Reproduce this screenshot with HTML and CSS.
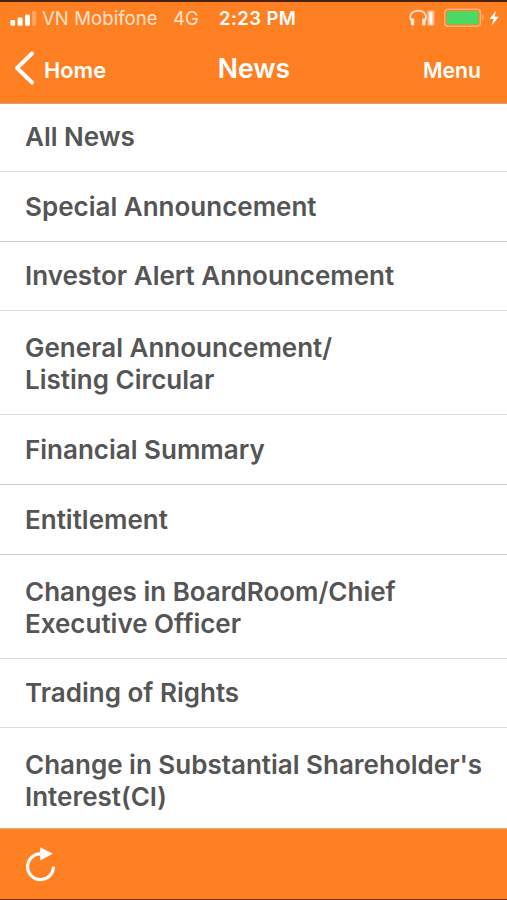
FILE: index.html
```html
<!DOCTYPE html>
<html lang="en">

<head>
    <meta charset="UTF-8">
    <meta name="viewport" content="width=device-width, initial-scale=1.0">
    <title>News</title>
    <link rel="stylesheet" href="styles.css">
</head>

<body>
    <div class="app">
        <div class="status">
            <svg class="signal" width="28" height="16" viewBox="0 0 28 16" fill="#fff">
                <rect x="0.3" y="10" width="4.8" height="5.7" rx="1.3" />
                <rect x="7.6" y="7.5" width="5" height="8.2" rx="1.3" />
                <rect x="15" y="4.5" width="5" height="11.2" rx="1.3" />
                <rect x="22.2" y="1" width="4" height="14.7" rx="1.3" opacity="0.3" />
            </svg>
            <span class="carrier">VN Mobifone</span>
            <span class="network">4G</span>
            <span class="time">2:23 PM</span>
            <svg class="battery" width="92" height="20" viewBox="0 0 92 20">
                <path d="M3.4 12.5C0.5 8 3.7 2.6 10.2 2.6S19.7 8 17 12.5" fill="none" stroke="#ffe3ce" stroke-width="1.8" />
                <rect x="2.9" y="10.4" width="3.3" height="7" rx="1" fill="#ffe9da" />
                <rect x="14.2" y="10.4" width="3.3" height="7" rx="1" fill="#ffe9da" />
                <rect x="19.4" y="2.5" width="7" height="15" rx="1" fill="#ffb98c" />
                <rect x="21.4" y="3.7" width="3" height="12.8" fill="#fff" />
                <rect x="36.8" y="1.2" width="35.6" height="17" rx="3.2" fill="none" stroke="#ffac70" stroke-width="1.6" />
                <rect x="38.6" y="3" width="32" height="13.4" rx="1" fill="#4bd863" />
                <path d="M74.2 6.6q3.6 3 0 6z" fill="#ffac70" />
                <path d="M88.2 2.5L81.5 11h4l-1.8 6.5L90.8 8.8h-4.3z" fill="#fff" />
            </svg>
        </div>
        <div class="navbar">
            <div class="back">
                <svg width="22" height="36" viewBox="0 0 22 36" fill="none" stroke="#fff" stroke-width="4" stroke-linecap="round" stroke-linejoin="round">
                    <path d="M19 3.5L4 18L19 32.5" />
                </svg>
                <span>Home</span>
            </div>
            <h1>News</h1>
            <div class="menu">Menu</div>
        </div>
        <ul class="list">
            <li class="light">All News</li>
            <li>Special Announcement</li>
            <li class="light">Investor Alert Announcement</li>
            <li class="double light">General Announcement/<br>Listing Circular</li>
            <li>Financial Summary</li>
            <li>Entitlement</li>
            <li class="double light">Changes in BoardRoom/Chief<br>Executive Officer</li>
            <li class="light">Trading of Rights</li>
            <li class="double">Change in Substantial Shareholder's<br>Interest(CI)</li>
        </ul>
        <div class="toolbar">
            <svg width="32" height="38" viewBox="0 0 32 38">
                <path d="M15.5 8.8A12.9 12.9 0 1 0 28.4 21.5" fill="none" stroke="#fff" stroke-width="3.2" />
                <path d="M15.2 2.2L27.8 8.8L15.2 15.5z" fill="#fff" />
            </svg>
        </div>
    </div>
</body>

</html>
```
FILE: styles.css
```css
* {
    margin: 0;
    padding: 0;
    box-sizing: border-box;
}

body {
    font-family: Inter, "Liberation Sans", sans-serif;
    background-color: #fff;
}

.app {
    height: 900px;
    overflow: hidden;
    display: flex;
    flex-direction: column;
}

.status {
    height: 34px;
    flex-shrink: 0;
    display: flex;
    align-items: center;
    padding-left: 10px;
    background-color: #ff8022;
    border-top: 2px solid #4b230b;
    color: #ffe3ce;
    font-size: 18.5px;
    line-height: 32px;
    white-space: nowrap;
}

.signal {
    margin-right: 4px;
}

.carrier {
    width: 131px;
    letter-spacing: 0.1px;
}

.network {
    width: 46px;
}

.time {
    width: 189px;
    color: #fff;
    font-weight: 600;
    letter-spacing: 0.4px;
}

.navbar {
    height: 70px;
    flex-shrink: 0;
    display: grid;
    grid-template-columns: 1fr auto 1fr;
    align-items: center;
    padding: 0 26px 1px 13px;
    background-color: #ff8022;
    border-bottom: 1px solid #d3a080;
    color: #fff;
    font-size: 21.8px;
    font-weight: 600;
}

.back {
    display: flex;
    align-items: center;
    gap: 9px;
}

.navbar h1 {
    font-size: 26.6px;
    font-weight: 600;
    padding: 0 0 1px 14px;
}

.menu {
    text-align: right;
    font-size: 21.2px;
    padding-top: 3px;
}

.back span {
    padding-top: 3px;
}

.list {
    flex: 1;
    min-height: 0;
    overflow: hidden;
    list-style: none;
}

.list li {
    height: 69.7px;
    padding: 18.7px 0 0 25px;
    border-bottom: 1px solid #cbcdcc;
    color: #555;
    font-size: 26px;
    font-weight: 600;
    line-height: 32px;
    white-space: nowrap;
}

.list .light {
    border-bottom-color: #dcdddc;
}

.list li:first-child {
    height: 68px;
    padding-top: 17px;
}

.list .double {
    height: 104px;
    padding-top: 21px;
}

.toolbar {
    height: 72px;
    flex-shrink: 0;
    padding: 16px 0 0 25px;
    background-color: #ff8022;
    border-top: 1px solid #e6b087;
    border-bottom: 1px solid #742f0d;
}
```
